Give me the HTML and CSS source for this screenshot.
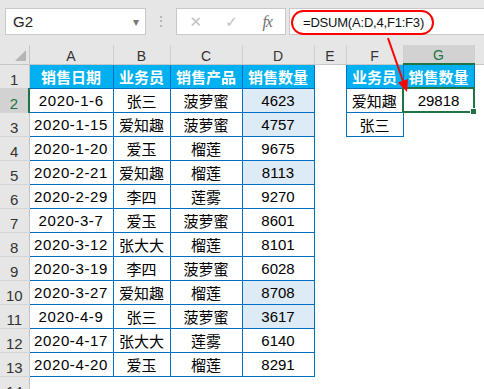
FILE: index.html
```html
<!DOCTYPE html>
<html lang="zh-CN">
<head>
  <meta charset="UTF-8" />
  <title>DSUM</title>
  <link rel="stylesheet" href="styles.css">
</head>
<body>
  <div class="app">
    <div class="toolbar">
      <div class="namebox"><span>G2</span><span class="caret">&#9662;</span></div>
      <div class="grip">&#8942;</div>
      <div class="fxbox">
        <span class="btn">&#10005;</span>
        <span class="btn">&#10003;</span>
        <span class="btn fx">fx</span>
      </div>
      <div class="formula"><span class="callout">=DSUM(A:D,4,F1:F3)</span></div>
    </div>

    <table class="sheet">
      <colgroup>
        <col style="width:29px"><col style="width:84px"><col style="width:57px"><col style="width:72px">
        <col style="width:72px"><col style="width:32px"><col style="width:57px"><col style="width:71px"><col>
      </colgroup>
      <tr class="cols">
        <th class="corner"><span class="tri"></span></th>
        <th class="ch">A</th><th class="ch">B</th><th class="ch">C</th><th class="ch">D</th>
        <th class="ch">E</th><th class="ch">F</th><th class="ch on">G</th><th class="ch end"></th>
      </tr>
      <tr>
        <th class="rh">1</th>
        <td class="hd">销售日期</td><td class="hd">业务员</td><td class="hd">销售产品</td><td class="hd">销售数量</td>
        <td></td><td class="hd">业务员</td><td class="hd">销售数量</td><td></td>
      </tr>
      <tr>
        <th class="rh on">2</th>
        <td class="c date">2020-1-6</td><td class="c">张三</td><td class="c">菠萝蜜</td><td class="c num hl">4623</td>
        <td></td><td class="c">爱知趣</td><td class="c num sel">29818</td><td></td>
      </tr>
      <tr>
        <th class="rh">3</th>
        <td class="c date">2020-1-15</td><td class="c">爱知趣</td><td class="c">菠萝蜜</td><td class="c num hl">4757</td>
        <td></td><td class="c">张三</td><td></td><td></td>
      </tr>
      <tr>
        <th class="rh">4</th>
        <td class="c date">2020-1-20</td><td class="c">爱玉</td><td class="c">榴莲</td><td class="c num">9675</td>
        <td></td><td></td><td></td><td></td>
      </tr>
      <tr>
        <th class="rh">5</th>
        <td class="c date">2020-2-21</td><td class="c">爱知趣</td><td class="c">榴莲</td><td class="c num hl">8113</td>
        <td></td><td></td><td></td><td></td>
      </tr>
      <tr>
        <th class="rh">6</th>
        <td class="c date">2020-2-29</td><td class="c">李四</td><td class="c">莲雾</td><td class="c num">9270</td>
        <td></td><td></td><td></td><td></td>
      </tr>
      <tr>
        <th class="rh">7</th>
        <td class="c date">2020-3-7</td><td class="c">爱玉</td><td class="c">菠萝蜜</td><td class="c num">8601</td>
        <td></td><td></td><td></td><td></td>
      </tr>
      <tr>
        <th class="rh">8</th>
        <td class="c date">2020-3-12</td><td class="c">张大大</td><td class="c">榴莲</td><td class="c num">8101</td>
        <td></td><td></td><td></td><td></td>
      </tr>
      <tr>
        <th class="rh">9</th>
        <td class="c date">2020-3-19</td><td class="c">李四</td><td class="c">菠萝蜜</td><td class="c num">6028</td>
        <td></td><td></td><td></td><td></td>
      </tr>
      <tr>
        <th class="rh">10</th>
        <td class="c date">2020-3-27</td><td class="c">爱知趣</td><td class="c">榴莲</td><td class="c num hl">8708</td>
        <td></td><td></td><td></td><td></td>
      </tr>
      <tr>
        <th class="rh">11</th>
        <td class="c date">2020-4-9</td><td class="c">张三</td><td class="c">菠萝蜜</td><td class="c num hl">3617</td>
        <td></td><td></td><td></td><td></td>
      </tr>
      <tr>
        <th class="rh">12</th>
        <td class="c date">2020-4-17</td><td class="c">张大大</td><td class="c">莲雾</td><td class="c num">6140</td>
        <td></td><td></td><td></td><td></td>
      </tr>
      <tr>
        <th class="rh">13</th>
        <td class="c date">2020-4-20</td><td class="c">爱玉</td><td class="c">榴莲</td><td class="c num">8291</td>
        <td></td><td></td><td></td><td></td>
      </tr>
      <tr>
        <th class="rh">14</th>
        <td></td><td></td><td></td><td></td><td></td><td></td><td></td><td></td>
      </tr>
    </table>

    <!-- red callout arrow from the formula to G2 -->
    <svg class="arrow" width="484" height="389" viewBox="0 0 484 389">
      <line x1="388" y1="38" x2="403" y2="81" stroke="#f00" stroke-width="2"/>
      <polygon points="407,92 408,79 398,82.5" fill="#f00"/>
    </svg>
  </div>
</body>
</html>
```

FILE: styles.css
```css
body {
  margin: 0;
  width: 484px;
  height: 389px;
  overflow: hidden;
  background: #fff;
  font-family: "Liberation Sans", "Noto Sans CJK SC", sans-serif;
  color: #000;
}

.app {
  position: relative;
}

/* formula bar */
.toolbar {
  display: flex;
  align-items: flex-start;
  height: 45px;
  box-sizing: border-box;
  padding: 8px 0 0 5px;
  background: #e6e6e6;
}
.namebox {
  width: 141px;
  height: 27px;
  box-sizing: border-box;
  display: flex;
  align-items: center;
  justify-content: space-between;
  padding: 0 6px 0 7px;
  background: #fff;
  border: 1px solid #c8c8c8;
  font-size: 15px;
  color: #222;
}
.caret {
  color: #777;
  font-size: 12px;
}
.grip {
  width: 30px;
  height: 27px;
  line-height: 26px;
  text-align: center;
  color: #a6a6a6;
  font-size: 14px;
}
.fxbox {
  width: 110px;
  height: 27px;
  box-sizing: border-box;
  display: flex;
  align-items: center;
  padding-left: 1px;
  background: #fff;
  border: 1px solid #c8c8c8;
}
.btn {
  width: 36px;
  text-align: center;
  color: #c2c2c2;
  font-size: 15px;
  font-family: "DejaVu Sans", sans-serif;
}
.fx {
  color: #707070;
  font-family: "Liberation Serif", serif;
  font-style: italic;
  font-size: 16px;
  letter-spacing: -1px;
}
.formula {
  flex: 1;
  height: 27px;
  box-sizing: border-box;
  margin-left: 3px;
  padding: 1px 0 0 1px;
  background: #fff;
  border: 1px solid #c8c8c8;
  border-right: none;
}
.callout {
  display: inline-block;
  height: 25px;
  box-sizing: border-box;
  padding: 0 8px 0 10px;
  border: 2px solid #f00;
  border-radius: 13px;
  line-height: 21px;
  font-size: 13px;
  letter-spacing: -0.2px;
  color: #111;
}

/* grid */
.sheet {
  border-collapse: collapse;
  table-layout: fixed;
  width: 484px;
}
.sheet tr {
  height: 24px;
}
.sheet tr.cols {
  height: 19px;
}
.sheet th {
  font-weight: normal;
  padding: 0;
}
.corner {
  background: #e6e6e6;
  border-right: 1px solid #c6c6c6;
  border-bottom: 1px solid #c6c6c6;
  position: relative;
}
.tri {
  position: absolute;
  right: 3px;
  bottom: 3px;
  width: 0;
  height: 0;
  border-left: 11px solid transparent;
  border-bottom: 11px solid #b5b5b5;
}
.ch {
  background: #e6e6e6;
  border-right: 1px solid #d0d0d0;
  border-bottom: 1px solid #c6c6c6;
  font-size: 14px;
  color: #333;
  vertical-align: bottom;
  padding-bottom: 1px;
}
.ch.end {
  border-right: none;
}
.ch.on {
  background: #d2d2d2;
  border-bottom: 2px solid #217346;
  color: #217346;
}
.rh {
  background: #e6e6e6;
  border-right: 1px solid #c6c6c6;
  border-bottom: 1px solid #d4d4d4;
  font-size: 15px;
  color: #333;
  vertical-align: bottom;
  padding-bottom: 1px;
}
.rh.on {
  background: #d2d2d2;
  border-right: 2px solid #217346;
  color: #217346;
}

.sheet td {
  padding: 1px 0 0;
  text-align: center;
  vertical-align: middle;
  white-space: nowrap;
  overflow: hidden;
  font-size: 15px;
}
.hd {
  background: #00b0f0;
  border: 1px solid #0070c0;
  color: #fff;
  font-weight: bold;
  font-family: "Noto Sans CJK SC", sans-serif;
}
.c {
  border: 1px solid #0070c0;
  font-family: "Noto Sans CJK SC", sans-serif;
}
.date,
.num {
  font-family: "Liberation Sans", sans-serif;
  font-size: 14.5px;
}
.date {
  letter-spacing: 0.6px;
}
.hl {
  background: #ddebf7;
}
.sheet td.sel {
  border: 2px solid #217346;
  position: relative;
  overflow: visible;
}
.sel::after {
  content: "";
  position: absolute;
  right: -4px;
  bottom: -4px;
  width: 5px;
  height: 5px;
  background: #217346;
  border: 1px solid #fff;
}

.arrow {
  position: absolute;
  top: 0;
  left: 0;
  pointer-events: none;
}
```
